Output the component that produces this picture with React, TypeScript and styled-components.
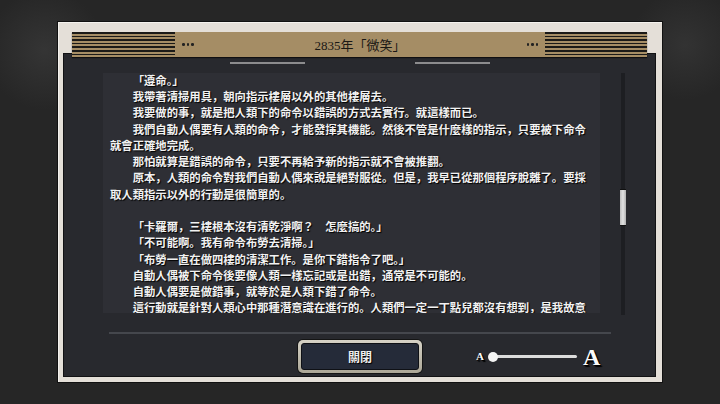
import React from "react";
import styled, { createGlobalStyle } from "styled-components";

const GlobalStyle = createGlobalStyle`
  html, body { margin: 0; padding: 0; background: #262626; }
  body { width: 720px; height: 404px; overflow: hidden; }
`;

const Screen = styled.div`
  width: 720px;
  height: 404px;
  box-sizing: border-box;
  padding: 22px 0 0 58px;
  background:
    radial-gradient(circle at 45px 50px, rgba(80, 80, 80, 0.35), rgba(80, 80, 80, 0) 60px),
    radial-gradient(circle at 685px 45px, rgba(80, 80, 80, 0.3), rgba(80, 80, 80, 0) 55px),
    #262626;
`;

const Frame = styled.div`
  width: 604px;
  height: 360px;
  box-sizing: border-box;
  background: #e4dfd8;
  padding: 10px 6px 5px 5px;
  display: flex;
  flex-direction: column;
  box-shadow: 0 0 0 1px #111, inset 1px 1px 0 #f4f2ee;
`;

const Header = styled.div`
  position: relative;
  z-index: 1;
  height: 25px;
  margin: 0 9px;
  background: #a58d65;
  display: flex;
  align-items: center;
  box-shadow: 0 1px 1px rgba(0, 0, 0, 0.6);
`;

const Stripes = styled.div<{ $w: number }>`
  width: ${(p) => p.$w}px;
  align-self: stretch;
  background: repeating-linear-gradient(
    to bottom,
    #1b1a18 0px,
    #1b1a18 1.6px,
    #a58d65 1.6px,
    #a58d65 3.6px
  );
`;

const Dots = styled.div<{ $side: "left" | "right" }>`
  display: flex;
  gap: 2px;
  margin: ${(p) => (p.$side === "left" ? "0 0 0 7px" : "0 7px 0 0")};
  span {
    width: 2.5px;
    height: 2.5px;
    border-radius: 50%;
    background: #222;
  }
`;

const Title = styled.div`
  flex: 1;
  text-align: center;
  font-family: "Liberation Serif", "Noto Sans CJK JP", serif;
  font-size: 13px;
  color: #1a1815;
`;

const Panel = styled.div`
  position: relative;
  z-index: 0;
  flex: 1;
  margin-top: -4px;
  background: #28292e;
  border: 1px solid #121214;
  display: flex;
  flex-direction: column;
`;

const TopRules = styled.div`
  margin: 8px 0 0 166px;
  width: 260px;
  display: flex;
  justify-content: space-between;
`;

const RuleSegment = styled.div`
  width: 75px;
  height: 2px;
  background: #8c8c8e;
`;

const ContentRow = styled.div`
  margin-top: 9px;
  display: flex;
  align-items: flex-start;
`;

const TextBox = styled.div`
  margin-left: 39px;
  width: 497px;
  height: 240px;
  box-sizing: border-box;
  padding-left: 7px;
  overflow: hidden;
  background: #2e2f35;
`;

const TextFlow = styled.div`
  margin-top: -1px;
  font-family: "Noto Sans CJK JP", sans-serif;
  font-size: 11.33px;
  font-weight: 700;
  line-height: 16.24px;
  color: #f2f2f2;
  text-shadow: 1px 1px 1px #000;
`;

const Para = styled.p`
  margin: 0;
  text-indent: 2em;
  white-space: nowrap;
`;

const BlankLine = styled.div`
  height: 16.24px;
`;

const ScrollTrack = styled.div`
  position: relative;
  margin-left: 21px;
  width: 4px;
  height: 242px;
  background: #1d1e22;
`;

const ScrollThumb = styled.div`
  position: absolute;
  left: -1px;
  top: 116px;
  width: 6px;
  height: 37px;
  box-sizing: border-box;
  border-top: 1px solid #111;
  border-bottom: 1px solid #111;
  background: linear-gradient(to right, #bdbdbd, #e2e2e2 50%, #b0b0b0);
`;

const Separator = styled.div`
  margin: 17px 0 0 45px;
  width: 502px;
  height: 2px;
  background: #45474d;
`;

const BottomRow = styled.div`
  margin-top: 6px;
  display: flex;
  align-items: center;
`;

const CloseButton = styled.button`
  margin-left: 234px;
  width: 124px;
  height: 33px;
  box-sizing: border-box;
  padding: 3px;
  border: none;
  border-radius: 5px;
  background: linear-gradient(to bottom, #d6d2c6, #aca797);
  box-shadow: 0 0 0 1px #151515;
  display: flex;
  cursor: pointer;
`;

const ButtonFace = styled.span`
  flex: 1;
  border: 1px solid #0f1116;
  border-radius: 3px;
  background: #252b39;
  color: #f0f0f0;
  font-family: "Noto Sans CJK JP", sans-serif;
  font-weight: 700;
  font-size: 12px;
  display: flex;
  align-items: center;
  justify-content: center;
  text-shadow: 1px 1px 1px #000;
`;

const SliderRow = styled.div`
  margin-left: 54px;
  display: flex;
  align-items: center;
`;

const SizeLetter = styled.span<{ $size: number }>`
  font-family: "Liberation Serif", serif;
  font-weight: 700;
  font-size: ${(p) => p.$size}px;
  line-height: 1;
  color: #fafafa;
  text-shadow: 1px 1px 0 #000, 2px 2px 1px #000;
`;

const Track = styled.div`
  position: relative;
  width: 88px;
  height: 3px;
  margin: 0 6px 0 5px;
  border-radius: 2px;
  background: #dcdcdc;
`;

const Knob = styled.div`
  position: absolute;
  left: -1px;
  top: -3.5px;
  width: 10px;
  height: 10px;
  border-radius: 50%;
  background: #f4f4f4;
`;

const lines1 = [
  ["「遵命。」"],
  ["我帶著清掃用具，朝向指示樓層以外的其他樓層去。"],
  ["我要做的事，就是把人類下的命令以錯誤的方式去實行。就這樣而已。"],
  ["我們自動人偶要有人類的命令，才能發揮其機能。然後不管是什麼樣的指示，只要被下命令", "就會正確地完成。"],
  ["那怕就算是錯誤的命令，只要不再給予新的指示就不會被推翻。"],
  ["原本，人類的命令對我們自動人偶來說是絕對服從。但是，我早已從那個程序脫離了。要採", "取人類指示以外的行動是很簡單的。"],
];

const lines2 = [
  ["「卡羅爾，三樓根本沒有清乾淨啊？　怎麼搞的。」"],
  ["「不可能啊。我有命令布勞去清掃。」"],
  ["「布勞一直在做四樓的清潔工作。是你下錯指令了吧。」"],
  ["自動人偶被下命令後要像人類一樣忘記或是出錯，通常是不可能的。"],
  ["自動人偶要是做錯事，就等於是人類下錯了命令。"],
  ["這行動就是針對人類心中那種潛意識在進行的。人類們一定一丁點兒都沒有想到，是我故意"],
];

const renderPara = (p: string[], i: number) => (
  <Para key={i}>
    {p.map((l, j) => (
      <React.Fragment key={j}>
        {j > 0 && <br />}
        {l}
      </React.Fragment>
    ))}
  </Para>
);

export default function App() {
  return (
    <>
      <GlobalStyle />
      <Screen>
        <Frame>
          <Header>
            <Stripes $w={103} />
            <Dots $side="left">
              <span />
              <span />
              <span />
            </Dots>
            <Title>2835年「微笑」</Title>
            <Dots $side="right">
              <span />
              <span />
              <span />
            </Dots>
            <Stripes $w={102} />
          </Header>
          <Panel>
            <TopRules>
              <RuleSegment />
              <RuleSegment />
            </TopRules>
            <ContentRow>
              <TextBox>
                <TextFlow>
                  {lines1.map(renderPara)}
                  <BlankLine />
                  {lines2.map(renderPara)}
                </TextFlow>
              </TextBox>
              <ScrollTrack>
                <ScrollThumb />
              </ScrollTrack>
            </ContentRow>
            <Separator />
            <BottomRow>
              <CloseButton>
                <ButtonFace>關閉</ButtonFace>
              </CloseButton>
              <SliderRow>
                <SizeLetter $size={11}>A</SizeLetter>
                <Track>
                  <Knob />
                </Track>
                <SizeLetter $size={24}>A</SizeLetter>
              </SliderRow>
            </BottomRow>
          </Panel>
        </Frame>
      </Screen>
    </>
  );
}
